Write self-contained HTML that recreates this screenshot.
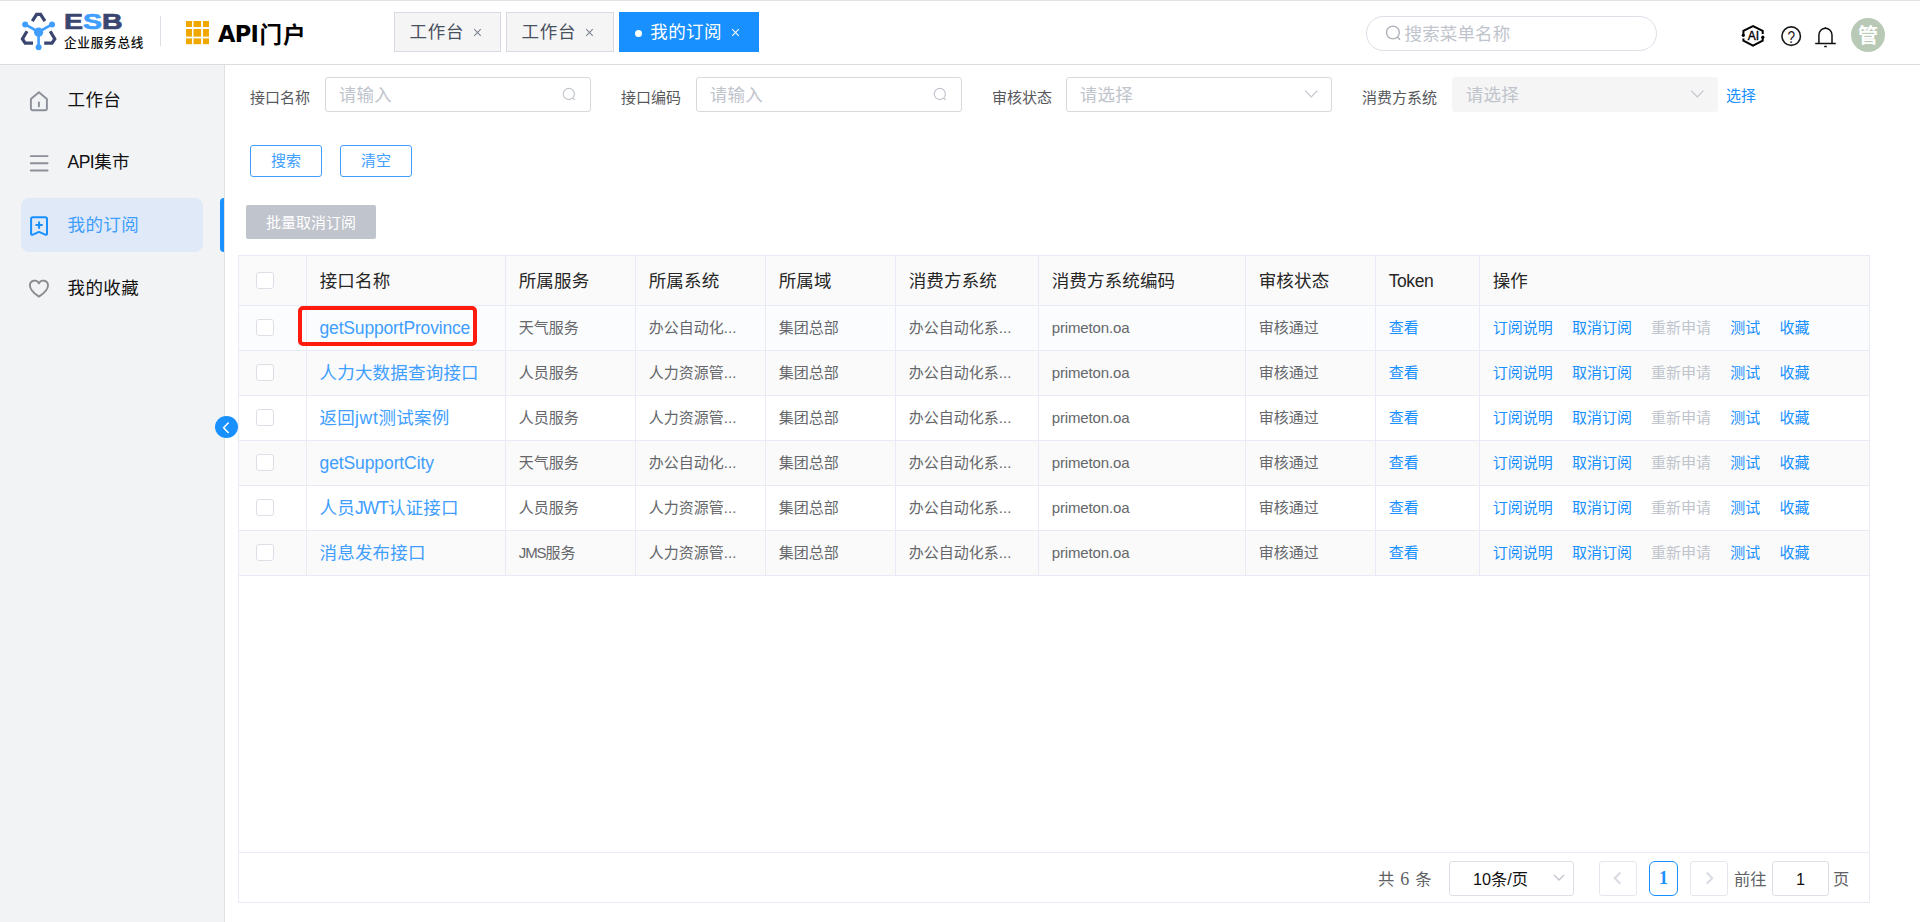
<!DOCTYPE html>
<html lang="zh-CN">
<head>
<meta charset="utf-8">
<title>API门户 - 我的订阅</title>
<style>
*{box-sizing:border-box;margin:0;padding:0}
html,body{width:1920px;height:922px;overflow:hidden;background:#fff}
body{font-family:"Liberation Sans","Noto Sans CJK SC",sans-serif;color:#303133;position:relative}
.abs{position:absolute}
/* header */
#hdr{position:absolute;left:0;top:0;width:1920px;height:65px;background:#fff;border-bottom:1px solid #dcdcdc;box-shadow:inset 0 1px 0 #e2e2e2}
#logo{position:absolute;left:0;top:1px}
.esb{position:absolute;left:63.8px;top:10.3px;font-weight:bold;font-size:22.6px;line-height:24px;color:#3a4570;transform-origin:0 0;transform:scaleX(1.26);letter-spacing:0;-webkit-text-stroke:.7px}
.esb b{color:#409eff}
.esbsub{position:absolute;left:64px;top:33.6px;font-size:12.6px;line-height:18px;color:#111;font-weight:500;white-space:nowrap;letter-spacing:.75px}
.vdiv{position:absolute;left:160px;top:16px;width:1px;height:30px;background:#dcdfe6}
.portal{position:absolute;left:218px;top:17px;font-size:22.5px;line-height:34px;font-weight:bold;color:#000;white-space:nowrap}
.portal .api{font-family:"DejaVu Sans","Liberation Sans",sans-serif;letter-spacing:-.7px}
.portal .mh{letter-spacing:1.2px;position:relative;top:1.2px;left:1.2px}
.tab{position:absolute;top:12px;height:40px;border:1px solid #d5dae4;background:#f5f5f5;color:#495060;font-size:17.5px;line-height:38px;white-space:nowrap}
.tab .t{position:absolute;left:14.6px;top:0;letter-spacing:.7px}
.tab .x{position:absolute;top:14.7px}
.tab.on{background:#1890ff;border-color:#1890ff;color:#fff}
.tab.on .dot{position:absolute;left:14.9px;top:17px;width:7px;height:7px;border-radius:50%;background:#fff}
#srch{position:absolute;left:1366px;top:16px;width:291px;height:35px;border:1px solid #dcdfe6;border-radius:18px;background:#fff}
#srch span{position:absolute;left:37.5px;top:.8px;letter-spacing:.15px;line-height:33px;font-size:17.5px;color:#c0c4cc;white-space:nowrap}
#avatar{position:absolute;left:1851px;top:18px;width:34px;height:34px;border-radius:50%;background:#b8c9b5;color:#fff;font-weight:bold;font-size:20px;line-height:37.5px;text-align:center}
/* sidebar */
#side{position:absolute;left:0;top:65px;width:225px;height:857px;background:#f2f3f5;border-right:1px solid #e1e1e3}
.mi{position:absolute;left:21px;width:182px;height:54px;border-radius:8px;font-size:17.5px;line-height:54px;color:#111}
.mi span{position:absolute;left:46.6px;top:0;white-space:nowrap;letter-spacing:.35px}
.mi svg{position:absolute;left:7px;top:16px}
.mi.on{background:#dfe9f7;color:#409eff}
#bar{position:absolute;left:220px;top:133px;width:4px;height:54px;background:#1890ff;border-radius:4px 0 0 4px}
#collapse{position:absolute;left:215px;top:416px;width:23px;height:22.2px;border-radius:50%;background:#1890ff}
/* form */
.lbl{position:absolute;font-size:15px;line-height:20px;color:#56585c;white-space:nowrap}
.inp{position:absolute;top:77px;height:35px;border:1px solid #d9d9d9;border-radius:3px;background:#fff}
.inp span{position:absolute;left:12.7px;top:1.3px;letter-spacing:.3px;line-height:33px;font-size:17.5px;color:#c0c4cc;white-space:nowrap}
.inp svg{position:absolute;right:12px;top:8px}
.btn{position:absolute;top:145px;width:72px;height:31.7px;border:1px solid #409eff;border-radius:3px;color:#409eff;font-size:15px;line-height:30px;text-align:center;background:#fff}
#batch{position:absolute;left:246px;top:205px;width:130px;height:33.7px;background:#c0c4cc;border-radius:2px;color:#fff;font-size:15px;line-height:35px;text-align:center}
/* table */
#tbl{position:absolute;left:238px;top:255px;width:1632px;height:648px;border:1px solid #e8ebf5;background:#fff}
.row{position:absolute;left:0;width:1630px;border-bottom:1px solid #e8ebf5}
.row.h{top:0;height:50px;background:#fafafa}
.row.alt{background:#fafafa}
.c{position:absolute;top:0;height:100%;border-right:1px solid #e8ebf5;white-space:nowrap;overflow:hidden}
.row.h .c{font-size:17.5px;line-height:50.6px;color:#262626;padding-left:12.7px;letter-spacing:.15px}
.row.d .c{font-size:15px;line-height:44px;color:#65676b;padding-left:12.8px}
.row.d .c.nm{font-size:17.5px;color:#409eff;padding-left:12.5px;letter-spacing:.2px}
.cb{position:absolute;left:17.3px;width:17.3px;height:16.6px;border:1px solid #dcdfe6;border-radius:3px;background:#fff}
a,.lk{color:#1890ff;text-decoration:none}
.dis{color:#c0c4cc}
.c.ops,.c.last{border-right:none}
.ops span{margin-right:19.15px}
#redbox{position:absolute;left:298px;top:306px;width:179px;height:40px;border:4px solid #ff1a0e;border-radius:5px}
.pb{top:8px;width:38px;height:35px;border:1px solid #e4e7ed;border-radius:3px;text-align:center;line-height:33px}
.pb.on{border-color:#1890ff;color:#1890ff;font-weight:bold;font-family:"Liberation Serif",serif;border-radius:6px;font-size:18px}
.sf{font-family:"Liberation Serif",serif;font-size:18px}
#pager{position:absolute;left:0;top:596px;width:1630px;height:51px;border-top:1px solid #e8ebf5;font-size:16.25px;color:#606266}
</style>
</head>
<body>
<div id="hdr">
<svg id="logo" width="64" height="64" viewBox="0 0 64 64">
<g fill="none" stroke="#3a4570" stroke-width="3.2" stroke-linejoin="miter">
<path d="M32.3 20.2 L36.6 13.4 L40.6 13.4 L44.9 20.2"/>
<path d="M27 30.2 L22.4 37.9 L25.2 42.2 L33 42.2"/>
<path d="M50.2 30.2 L54.8 37.9 L52 42.2 L44.2 42.2"/>
</g>
<g stroke="#409eff" stroke-width="2.6" fill="none">
<path d="M38.6 31 L25.2 23.4 M38.6 31 L52 23.4 M38.6 31 L38.6 46"/>
</g>
<g fill="#409eff">
<circle cx="38.6" cy="31.2" r="4.6"/>
<circle cx="25.2" cy="23.4" r="3"/>
<circle cx="52" cy="23.4" r="3"/>
<circle cx="38.6" cy="46.2" r="3"/>
</g>
</svg>
<div class="esb">E<b>S</b>B</div>
<div class="esbsub">企业服务总线</div>
<div class="vdiv"></div>
<svg class="abs" style="left:186px;top:21px" width="24" height="24" viewBox="0 0 24 24" fill="#f0a800">
<rect x="0" y="0" width="6" height="6"/><rect x="7.5" y="0" width="7.6" height="6"/><rect x="17" y="0" width="6" height="6"/>
<rect x="0" y="8" width="6" height="7.6"/><rect x="7.5" y="8" width="7.6" height="7.6"/><rect x="17" y="8" width="6" height="7.6"/>
<rect x="0" y="17.4" width="6" height="5.8"/><rect x="7.5" y="17.4" width="7.6" height="5.8"/><rect x="17" y="17.4" width="6" height="5.8"/>
</svg>
<div class="portal"><span class="api">API</span><span class="mh">门户</span></div>
<div class="tab" style="left:394px;width:107px"><span class="t">工作台</span><svg class="x" style="left:78px" width="9" height="9" viewBox="0 0 9 9" fill="none" stroke="#7b8190" stroke-width="1.05"><path d="M1.2 1.2 L7.8 7.8 M7.8 1.2 L1.2 7.8"/></svg></div>
<div class="tab" style="left:506px;width:108px"><span class="t">工作台</span><svg class="x" style="left:78px" width="9" height="9" viewBox="0 0 9 9" fill="none" stroke="#7b8190" stroke-width="1.05"><path d="M1.2 1.2 L7.8 7.8 M7.8 1.2 L1.2 7.8"/></svg></div>
<div class="tab on" style="left:619px;width:140px"><i class="dot"></i><span class="t" style="left:30.2px;letter-spacing:.45px">我的订阅</span><svg class="x" style="left:111.1px" width="9" height="9" viewBox="0 0 9 9" fill="none" stroke="#fff" stroke-width="1.05"><path d="M1.2 1.2 L7.8 7.8 M7.8 1.2 L1.2 7.8"/></svg></div>
<div id="srch"><svg class="abs" style="left:17px;top:7px" width="20" height="20" viewBox="0 0 20 20" fill="none" stroke="#aeb1b8" stroke-width="1.4"><circle cx="8.9" cy="8.5" r="6.4"/><path d="M13.5 13.1 L16 15.8"/></svg><span>搜索菜单名称</span></div>
<svg class="abs" style="left:1738px;top:22px" width="30" height="28" viewBox="0 0 30 28" fill="none" stroke="#000" stroke-width="2" stroke-linejoin="miter">
<path d="M5.4 13.3 V8.85 L15 4 L24.7 8.85 V12"/><path d="M24.7 15.2 V18.75 L15 23.6 L5.4 18.75 V16.4"/>
<circle cx="5.3" cy="13.3" r="1.6" fill="#000" stroke="none"/><circle cx="24.8" cy="15.2" r="1.6" fill="#000" stroke="none"/>
<text x="15.4" y="18.1" font-family="Liberation Sans,sans-serif" font-size="12" text-anchor="middle" fill="#000" stroke="#000" stroke-width=".35">AI</text>
</svg>
<svg class="abs" style="left:1779px;top:24px" width="24" height="24" viewBox="0 0 24 24" fill="none" stroke="#1a1a1a" stroke-width="1.6">
<circle cx="12.2" cy="12.15" r="9.25"/>
<text x="12.2" y="18.8" font-family="Liberation Sans,sans-serif" font-size="16" text-anchor="middle" fill="#1a1a1a" stroke="none" transform="translate(1.83 0) scale(.85 1)">?</text>
</svg>
<svg class="abs" style="left:1813px;top:24px" width="24" height="26" viewBox="0 0 24 26" fill="none" stroke="#111" stroke-width="1.5">
<path d="M5.9 19.4 V10.9 A6.55 6.55 0 0 1 19 10.9 V19.4"/><path d="M2.2 19.5 H22.8"/><path d="M11.2 22.5 H13.8"/><path d="M12.45 3.2 V4.8"/>
</svg>
<div id="avatar">管</div>
</div>
<div id="side">
<div class="mi" style="top:8px"><svg width="24" height="24" viewBox="0 0 24 24" fill="none" stroke="#8b8f98" stroke-width="1.9" stroke-linejoin="round" stroke-linecap="round"><path d="M2.9 10 L10.9 3.2 L18.9 10 V19.5 A1.8 1.8 0 0 1 17.1 21.3 H4.7 A1.8 1.8 0 0 1 2.9 19.5 Z"/><path d="M10.9 13.4 V17.4"/></svg><span>工作台</span></div>
<div class="mi" style="top:70px"><svg width="24" height="24" viewBox="0 0 24 24" fill="none" stroke="#8b8f98" stroke-width="1.9" stroke-linecap="round"><path d="M2.8 5.1 H19.6 M2.8 12.3 H19.6 M2.8 19.5 H19.6"/></svg><span><span style="letter-spacing:-.55px;position:static">API</span>集市</span></div>
<div class="mi on" style="top:133px"><svg width="24" height="24" viewBox="0 0 24 24" fill="none" stroke="#1890ff" stroke-width="2" stroke-linejoin="round" stroke-linecap="round"><path d="M3.1 19.4 V5 A1.8 1.8 0 0 1 4.9 3.2 H17.2 A1.8 1.8 0 0 1 19 5 V19.4 Q19 21.3 17.3 20.6 L11.05 17.9 L4.8 20.6 Q3.1 21.3 3.1 19.4 Z"/><path d="M8.2 11.1 H14 M11.1 8.2 V14"/></svg><span>我的订阅</span></div>
<div class="mi" style="top:196px"><svg width="24" height="24" viewBox="0 0 24 24" fill="none" stroke="#8c8c8c" stroke-width="1.9" stroke-linejoin="round"><path d="M10.95 19.6 C4.6 15.4 1.9 12.2 1.9 8.4 A4.75 4.75 0 0 1 10.95 6.4 A4.75 4.75 0 0 1 20 8.4 C20 12.2 17.3 15.4 10.95 19.6 Z"/></svg><span>我的收藏</span></div>
<div id="bar"></div>
</div>
<div id="main">
<div class="lbl" style="left:250px;top:87.6px">接口名称</div><div class="inp" style="left:325px;width:266px"><span>请输入</span><svg width="18" height="18" viewBox="0 0 18 18" fill="none" stroke="#c0c4cc" stroke-width="1.15"><circle cx="8.8" cy="8" r="5.6"/><path d="M12.8 12 L14.6 13.8"/></svg></div>
<div class="lbl" style="left:621px;top:87.6px">接口编码</div><div class="inp" style="left:696px;width:266px"><span>请输入</span><svg width="18" height="18" viewBox="0 0 18 18" fill="none" stroke="#c0c4cc" stroke-width="1.15"><circle cx="8.8" cy="8" r="5.6"/><path d="M12.8 12 L14.6 13.8"/></svg></div>
<div class="lbl" style="left:992px;top:87.6px">审核状态</div><div class="inp" style="left:1066px;width:266px"><span>请选择</span><svg width="18" height="18" viewBox="0 0 18 18" fill="none" stroke="#c0c4cc" stroke-width="1.15"><path d="M4.2 4.7 L10.3 11 L16.4 4.7"/></svg></div>
<div class="lbl" style="left:1362px;top:87.6px">消费方系统</div><div class="inp" style="left:1452px;width:266px;background:#f5f5f5;border-color:#f5f5f5"><span>请选择</span><svg width="18" height="18" viewBox="0 0 18 18" fill="none" stroke="#c0c4cc" stroke-width="1.15"><path d="M4.2 4.7 L10.3 11 L16.4 4.7"/></svg></div>
<div class="lbl" style="left:1726px;top:86px;color:#1890ff">选择</div>
<div class="btn" style="left:250px">搜索</div><div class="btn" style="left:340px">清空</div>
<div id="batch">批量取消订阅</div>
<div id="tbl">
<div class="row h"><div class="c " style="left:0px;width:68px"><i class="cb" style="top:16px"></i></div><div class="c " style="left:68px;width:199px">接口名称</div><div class="c " style="left:267px;width:130px">所属服务</div><div class="c " style="left:397px;width:130px">所属系统</div><div class="c " style="left:527px;width:130px">所属域</div><div class="c " style="left:657px;width:143px">消费方系统</div><div class="c " style="left:800px;width:207px">消费方系统编码</div><div class="c " style="left:1007px;width:130px">审核状态</div><div class="c " style="left:1137px;width:104px"><span style="letter-spacing:-.4px">Token</span></div><div class="c last" style="left:1241px;width:389px">操作</div></div>
<div class="row d" style="top:50px;height:45px;background:#fbfcfe"><div class="c " style="left:0px;width:68px"><i class="cb" style="top:13px"></i></div><div class="c nm" style="left:68px;width:199px"><span style="letter-spacing:-.17px">getSupportProvince</span></div><div class="c " style="left:267px;width:130px">天气服务</div><div class="c " style="left:397px;width:130px">办公自动化...</div><div class="c " style="left:527px;width:130px">集团总部</div><div class="c " style="left:657px;width:143px">办公自动化系...</div><div class="c " style="left:800px;width:207px"><span style="letter-spacing:-.15px">primeton.oa</span></div><div class="c " style="left:1007px;width:130px">审核通过</div><div class="c " style="left:1137px;width:104px"><span class="lk">查看</span></div><div class="c ops" style="left:1241px;width:389px"><span class="lk">订阅说明</span><span class="lk">取消订阅</span><span class="dis">重新申请</span><span class="lk">测试</span><span class="lk">收藏</span></div></div>
<div class="row d alt" style="top:95px;height:45px"><div class="c " style="left:0px;width:68px"><i class="cb" style="top:13px"></i></div><div class="c nm" style="left:68px;width:199px">人力大数据查询接口</div><div class="c " style="left:267px;width:130px">人员服务</div><div class="c " style="left:397px;width:130px">人力资源管...</div><div class="c " style="left:527px;width:130px">集团总部</div><div class="c " style="left:657px;width:143px">办公自动化系...</div><div class="c " style="left:800px;width:207px"><span style="letter-spacing:-.15px">primeton.oa</span></div><div class="c " style="left:1007px;width:130px">审核通过</div><div class="c " style="left:1137px;width:104px"><span class="lk">查看</span></div><div class="c ops" style="left:1241px;width:389px"><span class="lk">订阅说明</span><span class="lk">取消订阅</span><span class="dis">重新申请</span><span class="lk">测试</span><span class="lk">收藏</span></div></div>
<div class="row d" style="top:140px;height:45px"><div class="c " style="left:0px;width:68px"><i class="cb" style="top:13px"></i></div><div class="c nm" style="left:68px;width:199px">返回<span style="letter-spacing:.75px">jwt</span>测试案例</div><div class="c " style="left:267px;width:130px">人员服务</div><div class="c " style="left:397px;width:130px">人力资源管...</div><div class="c " style="left:527px;width:130px">集团总部</div><div class="c " style="left:657px;width:143px">办公自动化系...</div><div class="c " style="left:800px;width:207px"><span style="letter-spacing:-.15px">primeton.oa</span></div><div class="c " style="left:1007px;width:130px">审核通过</div><div class="c " style="left:1137px;width:104px"><span class="lk">查看</span></div><div class="c ops" style="left:1241px;width:389px"><span class="lk">订阅说明</span><span class="lk">取消订阅</span><span class="dis">重新申请</span><span class="lk">测试</span><span class="lk">收藏</span></div></div>
<div class="row d alt" style="top:185px;height:45px"><div class="c " style="left:0px;width:68px"><i class="cb" style="top:13px"></i></div><div class="c nm" style="left:68px;width:199px"><span style="letter-spacing:-.1px">getSupportCity</span></div><div class="c " style="left:267px;width:130px">天气服务</div><div class="c " style="left:397px;width:130px">办公自动化...</div><div class="c " style="left:527px;width:130px">集团总部</div><div class="c " style="left:657px;width:143px">办公自动化系...</div><div class="c " style="left:800px;width:207px"><span style="letter-spacing:-.15px">primeton.oa</span></div><div class="c " style="left:1007px;width:130px">审核通过</div><div class="c " style="left:1137px;width:104px"><span class="lk">查看</span></div><div class="c ops" style="left:1241px;width:389px"><span class="lk">订阅说明</span><span class="lk">取消订阅</span><span class="dis">重新申请</span><span class="lk">测试</span><span class="lk">收藏</span></div></div>
<div class="row d" style="top:230px;height:45px"><div class="c " style="left:0px;width:68px"><i class="cb" style="top:13px"></i></div><div class="c nm" style="left:68px;width:199px">人员<span style="letter-spacing:-1px">JWT</span>认证接口</div><div class="c " style="left:267px;width:130px">人员服务</div><div class="c " style="left:397px;width:130px">人力资源管...</div><div class="c " style="left:527px;width:130px">集团总部</div><div class="c " style="left:657px;width:143px">办公自动化系...</div><div class="c " style="left:800px;width:207px"><span style="letter-spacing:-.15px">primeton.oa</span></div><div class="c " style="left:1007px;width:130px">审核通过</div><div class="c " style="left:1137px;width:104px"><span class="lk">查看</span></div><div class="c ops" style="left:1241px;width:389px"><span class="lk">订阅说明</span><span class="lk">取消订阅</span><span class="dis">重新申请</span><span class="lk">测试</span><span class="lk">收藏</span></div></div>
<div class="row d alt" style="top:275px;height:45px"><div class="c " style="left:0px;width:68px"><i class="cb" style="top:13px"></i></div><div class="c nm" style="left:68px;width:199px">消息发布接口</div><div class="c " style="left:267px;width:130px"><span style="letter-spacing:-1.1px">JMS</span>服务</div><div class="c " style="left:397px;width:130px">人力资源管...</div><div class="c " style="left:527px;width:130px">集团总部</div><div class="c " style="left:657px;width:143px">办公自动化系...</div><div class="c " style="left:800px;width:207px"><span style="letter-spacing:-.15px">primeton.oa</span></div><div class="c " style="left:1007px;width:130px">审核通过</div><div class="c " style="left:1137px;width:104px"><span class="lk">查看</span></div><div class="c ops" style="left:1241px;width:389px"><span class="lk">订阅说明</span><span class="lk">取消订阅</span><span class="dis">重新申请</span><span class="lk">测试</span><span class="lk">收藏</span></div></div>
<div id="pager">
<span class="abs" style="left:1139px;top:0;line-height:52px;white-space:nowrap;word-spacing:1.5px">共 <span class="sf">6</span> 条</span>
<div class="abs" style="left:1210px;top:8px;width:125px;height:35px;border:1px solid #dcdfe6;border-radius:3px"><span class="abs" style="left:23px;top:0;line-height:34px;color:#111;white-space:nowrap">10条/页</span><svg class="abs" style="left:101px;top:9.3px" width="16" height="14" viewBox="0 0 16 14" fill="none" stroke="#c0c4cc" stroke-width="1.3"><path d="M3 4 L8 9 L13 4"/></svg></div>
<div class="abs pb" style="left:1360px"><svg width="36" height="33" viewBox="0 0 36 33" fill="none" stroke="#d9dce3" stroke-width="2.1"><path d="M20.3 10.6 L14.8 16.2 L20.3 21.8"/></svg></div>
<div class="abs pb on" style="left:1410px;width:29px">1</div>
<div class="abs pb" style="left:1451px"><svg width="36" height="33" viewBox="0 0 36 33" fill="none" stroke="#d9dce3" stroke-width="2.1"><path d="M15.7 10.6 L21.2 16.2 L15.7 21.8"/></svg></div>
<span class="abs" style="left:1495px;top:0;line-height:52px">前往</span>
<div class="abs" style="left:1533px;top:8px;width:57px;height:35px;border:1px solid #dcdfe6;border-radius:3px;text-align:center;line-height:34px;color:#111">1</div>
<span class="abs" style="left:1594px;top:0;line-height:52px">页</span>
</div>
</div>
<div id="redbox"></div>
<div id="collapse"><svg width="23" height="23" viewBox="0 0 23 23" fill="none" stroke="#fff" stroke-width="1.5"><path d="M13.6 6.6 L8.6 11.8 L13.6 17"/></svg></div>
</div>
</body>
</html>
